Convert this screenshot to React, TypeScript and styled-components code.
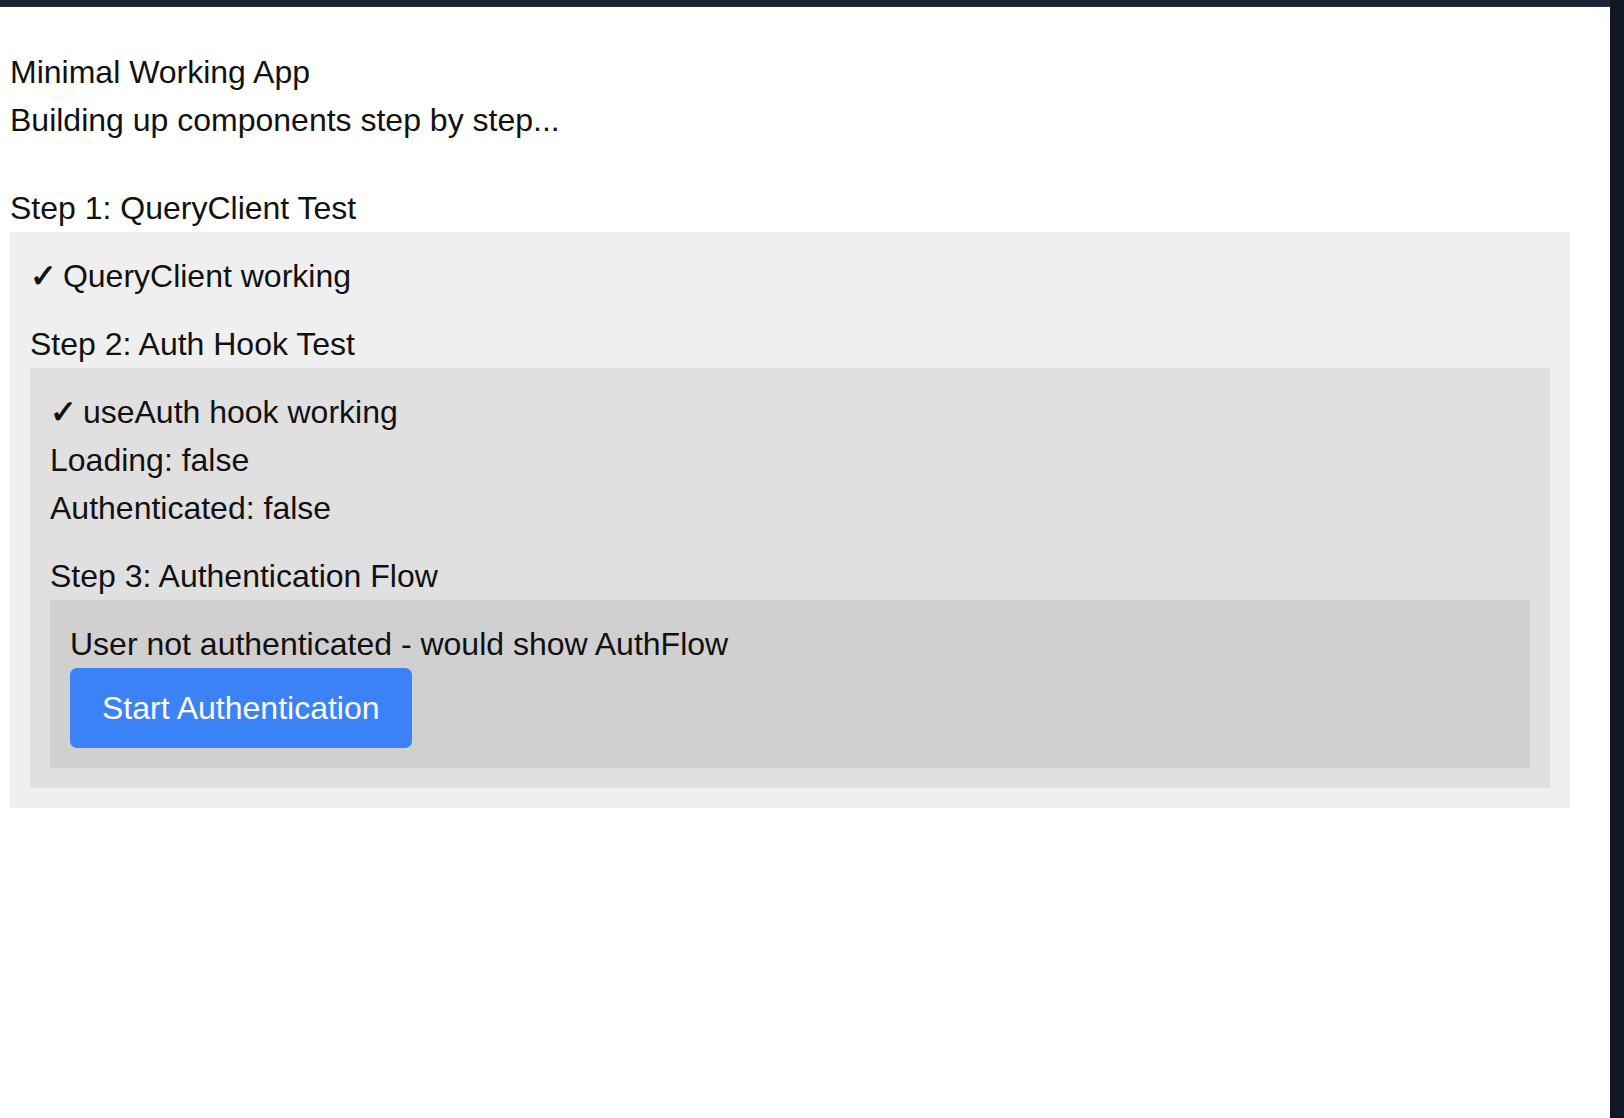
import React from "react";
import styled, { createGlobalStyle } from "styled-components";

const GlobalStyle = createGlobalStyle`
  html, body {
    margin: 0;
    padding: 0;
    background: #ffffff;
  }
  body {
    font-family: "Liberation Sans", Arial, Helvetica, sans-serif;
    font-size: 32px;
    line-height: 48px;
    color: #111111;
  }
  * { box-sizing: border-box; }
`;

const Shell = styled.div`
  display: flex;
  width: 1624px;
  height: 1118px;
  overflow: hidden;
`;

const Main = styled.div`
  width: 1610px;
  display: flex;
  flex-direction: column;
  background: #ffffff;
`;

const TopBar = styled.div`
  height: 7px;
  flex: none;
  background: #1e2235;
  border-bottom: 1px solid #2b3047;
`;

const SideRail = styled.div`
  width: 14px;
  flex: none;
  background: #0f1726;
`;

const Content = styled.div`
  padding: 41px 0 0 10px;
  display: flex;
  flex-direction: column;
`;

const Line = styled.div`
  font-size: 32px;
  line-height: 48px;
  height: 48px;
  white-space: nowrap;
`;

const Check = styled.span`
  display: inline-block;
  width: 24px;
  font-family: "DejaVu Sans", sans-serif;
  font-size: 32px;
  line-height: 1;
  vertical-align: baseline;
  -webkit-text-stroke: 1px #111111;
  overflow: visible;
`;

const StepTitle = styled.div<{ $gap: number }>`
  margin-top: ${(p) => p.$gap}px;
  font-size: 32px;
  line-height: 48px;
  white-space: nowrap;
`;

const panelColors: Record<number, string> = {
  1: "#efefef",
  2: "#e0e0e0",
  3: "#d0d0d0",
};

const Panel = styled.div<{ $level: number; $width?: number }>`
  background: ${(p) => panelColors[p.$level]};
  padding: 20px;
  width: ${(p) => (p.$width ? `${p.$width}px` : "auto")};
  display: flex;
  flex-direction: column;
  align-items: stretch;
`;

const ActionButton = styled.button`
  align-self: flex-start;
  background: #3b82f6;
  color: #ffffff;
  border: none;
  border-radius: 7px;
  padding: 16px 32px;
  font-family: "Liberation Sans", Arial, Helvetica, sans-serif;
  font-size: 32px;
  line-height: 48px;
  cursor: pointer;
`;

export default function App() {
  return (
    <>
      <GlobalStyle />
      <Shell>
        <Main>
          <TopBar />
          <Content>
            <Line>Minimal Working App</Line>
            <Line>Building up components step by step...</Line>
            <StepTitle $gap={40}>Step 1: QueryClient Test</StepTitle>
            <Panel $level={1} $width={1560}>
              <Line>
                <Check>✓</Check> QueryClient working
              </Line>
              <StepTitle $gap={20}>Step 2: Auth Hook Test</StepTitle>
              <Panel $level={2}>
                <Line>
                  <Check>✓</Check> useAuth hook working
                </Line>
                <Line>Loading: false</Line>
                <Line>Authenticated: false</Line>
                <StepTitle $gap={20}>Step 3: Authentication Flow</StepTitle>
                <Panel $level={3}>
                  <Line>User not authenticated - would show AuthFlow</Line>
                  <ActionButton type="button">Start Authentication</ActionButton>
                </Panel>
              </Panel>
            </Panel>
          </Content>
        </Main>
        <SideRail />
      </Shell>
    </>
  );
}
